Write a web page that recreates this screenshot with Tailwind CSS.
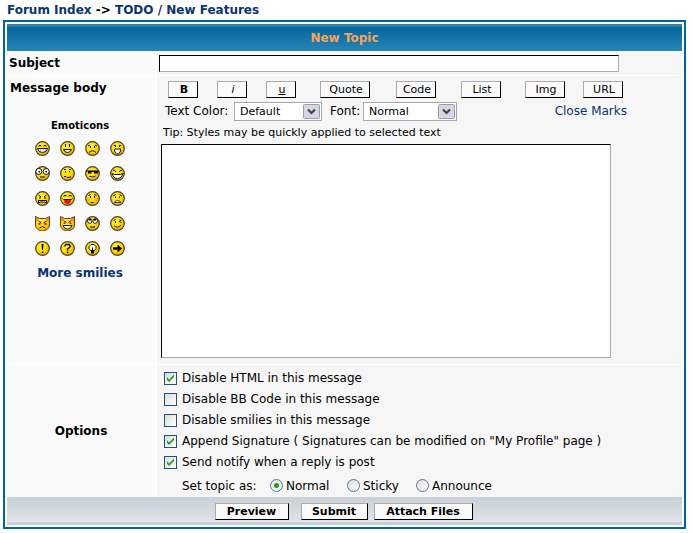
<!DOCTYPE html>
<html lang="en">
<head>
<meta charset="utf-8">
<meta name="viewport" content="width=device-width, initial-scale=1">
<title>New Topic</title>
<script src="https://cdn.jsdelivr.net/npm/@tailwindcss/browser@4"></script>
</head>
<body class="bg-white font-['Verdana','DejaVu_Sans',sans-serif] text-[12px] leading-[15px] text-black">
<svg class="absolute size-0" aria-hidden="true">
  <defs>
    <radialGradient id="skin" cx="40%" cy="35%" r="65%">
      <stop offset="0" stop-color="#fff04a"/><stop offset=".55" stop-color="#ffde00"/><stop offset="1" stop-color="#f0a800"/>
    </radialGradient>
    <symbol id="ball" viewBox="0 0 15 15"><circle cx="7.500" cy="7.500" r="6.800" fill="url(#skin)" stroke="#4a4230" stroke-width="1.200"/></symbol>
    <symbol id="devil" viewBox="0 0 15 15"><path d="M.5.5 4.500 2.500h6L14.500.5V9a7 6 0 0 1-14 0z" fill="url(#skin)" stroke="#6b3a20"/><path d="M1 1l3 2-2.500 3zM14 1l-3 2 2.500 3z" fill="#e8813c"/></symbol>
  </defs>
</svg>

<nav class="px-[7px] pt-[3px] text-[12px] font-bold leading-[14px]" aria-label="Breadcrumb">
  <a href="#" class="text-[#0a3472]">Forum Index</a> -&gt; <a href="#" class="text-[#0a3472]">TODO / New Features</a>
</nav>

<form class="mx-[3px] mt-[3px] mr-[7px] border-2 border-[#006699] p-[2px]" onsubmit="return false">
  <h1 class="flex h-[27px] items-center justify-center border-t-[3px] border-[#2f80a8] bg-linear-to-b from-[#00669b] to-[#2785b8] pb-[2px] text-[12px] font-bold text-[#f5a55a]">New Topic</h1>

  <div class="mt-px grid grid-cols-[148px_1fr] gap-x-[2px] gap-y-px">
    <label for="subject" class="flex items-center bg-[#fafafa] px-[2px] font-bold">Subject</label>
    <div class="bg-[#f6f6f6] px-[2px] py-[3px]">
      <input id="subject" type="text" class="block h-[17px] w-[460px] max-w-full border border-t-black border-r-[#aaa] border-b-[#aaa] border-l-black bg-white px-1 outline-none">
    </div>

    <div class="bg-[#fafafa] pt-[5px]">
      <label for="message" class="block px-[3px] font-bold">Message body</label>
      <h2 class="mt-[23px] pr-[2px] text-center text-[10px] font-bold leading-[13px]">Emoticons</h2>
      <div class="mt-[9px] ml-[28px] grid w-[90px] grid-cols-4 gap-[10px] [&_svg]:block [&_svg]:size-[15px]">
        <button type="button" aria-label="Very happy"><svg viewBox="0 0 15 15"><use href="#ball"/><path d="M4 5.500V4.500h2v1M9 5.500V4.500h2v1" fill="none" stroke="#111"/><path d="M2.500 7.500h10q-.5 4-5 4t-5-4z" fill="#fff" stroke="#111"/><path d="M5.500 8v2M8 8v3M10.500 8v2" stroke="#777" stroke-width=".5"/></svg></button>
        <button type="button" aria-label="Smile"><svg viewBox="0 0 15 15"><use href="#ball"/><path d="M5.500 3v3M9.500 3v3" stroke="#111"/><path d="M3.500 8.500h8q-1 3-4 3t-4-3z" fill="#fff" stroke="#111"/></svg></button>
        <button type="button" aria-label="Sad"><svg viewBox="0 0 15 15"><use href="#ball"/><path d="M3 5l2-1M12 5l-2-1M5.500 5v2M9.500 5v2M4 11.500q3.500-3.500 7 0" fill="none" stroke="#111"/></svg></button>
        <button type="button" aria-label="Surprised"><svg viewBox="0 0 15 15"><use href="#ball"/><path d="M4 4.500h2M9 4.500h2M5.500 5v1M9.500 5v1" stroke="#111"/><path d="M4.500 8h6v2q-1 3-3 3t-3-3z" fill="#fff" stroke="#111"/><path d="M6 12h3v1H6z" fill="#c33"/></svg></button>

        <button type="button" aria-label="Shocked"><svg viewBox="0 0 15 15"><use href="#ball"/><circle cx="3.800" cy="5.500" r="3" fill="#fff" stroke="#111"/><circle cx="11.200" cy="5.500" r="3" fill="#fff" stroke="#111"/><path d="M3.500 5h1.500v1.500H3.500zM10.500 5H12v1.500h-1.500zM5 10.500h5v1H5z"/></svg></button>
        <button type="button" aria-label="Confused"><svg viewBox="0 0 15 15"><use href="#ball"/><path d="M4 3.500h2M9 3.500h2M5.500 5v1.500M9.500 5v1.500M4 10.500h2l1 1h2l2-1" fill="none" stroke="#111"/></svg></button>
        <button type="button" aria-label="Cool"><svg viewBox="0 0 15 15"><use href="#ball"/><path d="M1 4.500h13v1h-1v2H9v-1.500H6.500v1.500H3v-2H1z"/><path d="M4.500 10.500h2l1 .5 3-1" fill="none" stroke="#111"/></svg></button>
        <button type="button" aria-label="Laughing"><svg viewBox="0 0 15 15"><use href="#ball"/><path d="M3 4l3 1.500M12 4L9 5.500M1.500 7.500l1 1M13.500 7.500l-1 1" stroke="#111"/><path d="M2.500 7.500l2 1h6l2-1q-.5 5-5 5t-5-5z" fill="#fff" stroke="#111"/></svg></button>

        <button type="button" aria-label="Mad"><svg viewBox="0 0 15 15"><use href="#ball"/><path d="M3.500 4l2.500 2M11.500 4L9 6M4 7h2M9 7h2" stroke="#111" fill="none"/><path d="M3.500 12V9.500h8V12l-2-1h-4z" fill="#fff" stroke="#111"/></svg></button>
        <button type="button" aria-label="Razz"><svg viewBox="0 0 15 15"><use href="#ball"/><path d="M4 5.500V4.500h2v1M9 5.500V4.500h2v1M2.500 7.500l1 1h8l1-1" fill="none" stroke="#111"/><path d="M4 9h7q0 4-3.500 4T4 9z" fill="#e81414"/></svg></button>
        <button type="button" aria-label="Embarrassed"><svg viewBox="0 0 15 15"><use href="#ball"/><circle cx="3.500" cy="8.500" r="1.500" fill="#f3a62c"/><circle cx="11.500" cy="8.500" r="1.500" fill="#f3a62c"/><path d="M3.500 4.500l2-1M9 3.500l2.500 1M5.500 5v2M9.500 5v2M5.500 11.500h3" stroke="#111"/></svg></button>
        <button type="button" aria-label="Crying"><svg viewBox="0 0 15 15"><use href="#ball"/><path d="M3 5l2.500-1.500M12 5L9.500 3.500M5.500 5.500v1.500M9.500 5.500v1.500" stroke="#111"/><path d="M4 11.500q3.500-4 7 0z" fill="#fff" stroke="#333"/><path d="M3 8h1.500v3H3z" fill="#b9dcf5"/></svg></button>

        <button type="button" aria-label="Evil"><svg viewBox="0 0 15 15"><use href="#devil"/><path d="M3.500 5l3 2M11.500 5l-3 2M4.500 12q3-3 6 0" fill="none" stroke="#111"/><path d="M3.500 7h2v2h-2zM9.500 7h2v2h-2z" fill="#d11"/></svg></button>
        <button type="button" aria-label="Twisted evil"><svg viewBox="0 0 15 15"><use href="#devil"/><path d="M3.500 4.500l3 2M11.500 4.500l-3 2" stroke="#111"/><path d="M3.500 6.500h2v1.500h-2zM9.500 6.500h2v1.500h-2z" fill="#d11"/><path d="M3 9.500h9q-1 3.500-4.500 3.500T3 9.500z" fill="#fff" stroke="#111"/></svg></button>
        <button type="button" aria-label="Rolling eyes"><svg viewBox="0 0 15 15"><use href="#ball"/><circle cx="4.800" cy="5" r="2.300" fill="#fff" stroke="#222"/><circle cx="10.200" cy="5" r="2.300" fill="#fff" stroke="#222"/><path d="M4 3h2v1.500H4zM9 3h2v1.500H9zM5 10.500h5v1H5z"/></svg></button>
        <button type="button" aria-label="Wink"><svg viewBox="0 0 15 15"><use href="#ball"/><path d="M3.500 4.500l2-1M5.500 5v2M9 5.500l2.500 1M9.500 4l2 .5M4 9.500q3.500 3.500 7-.5" fill="none" stroke="#111"/></svg></button>

        <button type="button" aria-label="Exclamation"><svg viewBox="0 0 15 15"><use href="#ball"/><path d="M6.500 3h2L8 9H7zM6.800 10.500h1.500V12H6.800z"/></svg></button>
        <button type="button" aria-label="Question"><svg viewBox="0 0 15 15"><use href="#ball"/><path d="M5 5.500V4.500l1-1h3l1 1V6L7.500 8v1.500" fill="none" stroke="#111" stroke-width="1.500"/><path d="M6.800 10.700h1.500v1.500H6.800z"/></svg></button>
        <button type="button" aria-label="Idea"><svg viewBox="0 0 15 15"><use href="#ball"/><path d="M5.500 9.500L4 7.500v-2L6 3.500h3l2 2v2L9.500 9.500z" fill="#fffbe0" stroke="#111"/><path d="M6 9h3v3.500H6zM7 6.500h1V10H7z"/></svg></button>
        <button type="button" aria-label="Arrow"><svg viewBox="0 0 15 15"><use href="#ball"/><path d="M3 6.300h4.500V3.500l4.500 4-4.500 4V8.700H3z"/></svg></button>
      </div>
      <a href="#" class="mt-[10px] block pr-[2px] text-center font-bold text-[#0a3472]">More smilies</a>
    </div>

    <div class="bg-[#f6f6f6] px-[4px] pt-[5px] pb-[6px]">
      <div class="flex pl-[7px] text-[11px] [&_button]:h-[17px] [&_button]:border [&_button]:border-t-[#aaa] [&_button]:border-l-[#aaa] [&_button]:border-r-black [&_button]:border-b-black [&_button]:bg-[#fafafa] [&_button]:pl-[2px]">
        <button type="button" class="w-[30px] font-bold">B</button>
        <button type="button" class="ml-[19px] w-[30px] italic">i</button>
        <button type="button" class="ml-[19px] w-[30px] underline">u</button>
        <button type="button" class="ml-[24px] w-[50px]">Quote</button>
        <button type="button" class="ml-[26px] w-[40px]">Code</button>
        <button type="button" class="ml-[25px] w-[40px]">List</button>
        <button type="button" class="ml-[24px] w-[40px]">Img</button>
        <button type="button" class="ml-[18px] w-[40px]">URL</button>
      </div>
      <div class="mt-[4px] flex w-[466px] max-w-full items-center pl-[4px]">
        <label for="color" class="w-[69px]">Text Color:</label>
        <div class="grid w-[88px] items-center">
          <select id="color" class="h-[19px] w-full appearance-none border border-[#a2a8b2] bg-white pl-[5px] text-[11px] leading-[15px] [grid-area:1/1]"><option>Default</option><option>Red</option><option>Blue</option></select>
          <svg viewBox="0 0 17 15" class="pointer-events-none mr-[2px] h-[15px] w-[17px] justify-self-end [grid-area:1/1]"><rect x=".5" y=".5" width="16" height="14" rx="1" fill="#d5d7e2" stroke="#9a9cae"/><path d="M5 5.500l3.500 3.500 3.500-3.500" fill="none" stroke="#444" stroke-width="2.200"/></svg>
        </div>
        <label for="font" class="ml-[8px] w-[33px]">Font:</label>
        <div class="grid w-[94px] items-center">
          <select id="font" class="h-[19px] w-full appearance-none border border-[#a2a8b2] bg-white pl-[5px] text-[11px] leading-[15px] [grid-area:1/1]"><option>Normal</option><option>Small</option><option>Large</option></select>
          <svg viewBox="0 0 17 15" class="pointer-events-none mr-[2px] h-[15px] w-[17px] justify-self-end [grid-area:1/1]"><rect x=".5" y=".5" width="16" height="14" rx="1" fill="#d5d7e2" stroke="#9a9cae"/><path d="M5 5.500l3.500 3.500 3.500-3.500" fill="none" stroke="#444" stroke-width="2.200"/></svg>
        </div>
        <a href="#" class="ml-auto text-[#0a3472]">Close Marks</a>
      </div>
      <p class="mt-[4px] pl-[2px] text-[11px]">Tip: Styles may be quickly applied to selected text</p>
      <textarea id="message" class="mt-[4px] block h-[214px] w-[450px] max-w-full resize-none border border-t-black border-r-[#aaa] border-b-[#aaa] border-l-black bg-white p-1 outline-none"></textarea>
    </div>

    <div class="flex items-center justify-center bg-[#fafafa] font-bold">Options</div>
    <fieldset class="bg-[#f6f6f6] pt-[3px] pb-[3px] pl-[7px]">
      <label class="flex h-[21px] items-center gap-[5px]"><span class="grid"><input type="checkbox" checked class="peer size-[13px] appearance-none border border-[#1c5180] bg-linear-to-br from-[#dcdcd7] to-white [grid-area:1/1]"><svg viewBox="0 0 13 13" class="pointer-events-none invisible size-[13px] [grid-area:1/1] peer-checked:visible"><path d="M3 5v3l2 2 5-5V2.500L5 7.500z" fill="#21a121"/></svg></span>Disable HTML in this message</label>
      <label class="flex h-[21px] items-center gap-[5px]"><span class="grid"><input type="checkbox" class="peer size-[13px] appearance-none border border-[#1c5180] bg-linear-to-br from-[#dcdcd7] to-white [grid-area:1/1]"><svg viewBox="0 0 13 13" class="pointer-events-none invisible size-[13px] [grid-area:1/1] peer-checked:visible"><path d="M3 5v3l2 2 5-5V2.500L5 7.500z" fill="#21a121"/></svg></span>Disable BB Code in this message</label>
      <label class="flex h-[21px] items-center gap-[5px]"><span class="grid"><input type="checkbox" class="peer size-[13px] appearance-none border border-[#1c5180] bg-linear-to-br from-[#dcdcd7] to-white [grid-area:1/1]"><svg viewBox="0 0 13 13" class="pointer-events-none invisible size-[13px] [grid-area:1/1] peer-checked:visible"><path d="M3 5v3l2 2 5-5V2.500L5 7.500z" fill="#21a121"/></svg></span>Disable smilies in this message</label>
      <label class="flex h-[21px] items-center gap-[5px]"><span class="grid"><input type="checkbox" checked class="peer size-[13px] appearance-none border border-[#1c5180] bg-linear-to-br from-[#dcdcd7] to-white [grid-area:1/1]"><svg viewBox="0 0 13 13" class="pointer-events-none invisible size-[13px] [grid-area:1/1] peer-checked:visible"><path d="M3 5v3l2 2 5-5V2.500L5 7.500z" fill="#21a121"/></svg></span>Append Signature ( Signatures can be modified on "My Profile" page )</label>
      <label class="flex h-[21px] items-center gap-[5px]"><span class="grid"><input type="checkbox" checked class="peer size-[13px] appearance-none border border-[#1c5180] bg-linear-to-br from-[#dcdcd7] to-white [grid-area:1/1]"><svg viewBox="0 0 13 13" class="pointer-events-none invisible size-[13px] [grid-area:1/1] peer-checked:visible"><path d="M3 5v3l2 2 5-5V2.500L5 7.500z" fill="#21a121"/></svg></span>Send notify when a reply is post</label>
      <div class="flex h-[21px] items-end pl-[18px]">
        <span class="w-[88px]">Set topic as:</span>
        <label class="flex w-[77px] gap-[3px]"><input type="radio" name="type" checked class="size-[13px] appearance-none rounded-full border border-[#54789b] bg-[radial-gradient(circle,#21a121_2px,#f0f0ec_3px)]">Normal</label>
        <label class="flex w-[69px] gap-[3px]"><input type="radio" name="type" class="size-[13px] appearance-none rounded-full border border-[#54789b] bg-linear-to-br from-[#dcdcd7] to-white">Sticky</label>
        <label class="flex gap-[3px]"><input type="radio" name="type" class="size-[13px] appearance-none rounded-full border border-[#54789b] bg-linear-to-br from-[#dcdcd7] to-white">Announce</label>
      </div>
    </fieldset>
  </div>

  <div class="flex h-[28px] items-center justify-center border-b-[3px] border-[#c8d0d7] bg-linear-to-b from-[#c8d0d7] to-[#dfe4e9] pt-[3px] pr-[2px] text-[11px] font-bold [&_button]:h-[17px] [&_button]:border [&_button]:border-t-[#aaa] [&_button]:border-l-[#aaa] [&_button]:border-r-black [&_button]:border-b-black [&_button]:bg-[#fafafa]">
    <button type="button" class="w-[74px]">Preview</button>
    <button type="submit" class="ml-[12px] w-[67px]">Submit</button>
    <button type="button" class="ml-[6px] w-[99px]">Attach Files</button>
  </div>
</form>
</body>
</html>
